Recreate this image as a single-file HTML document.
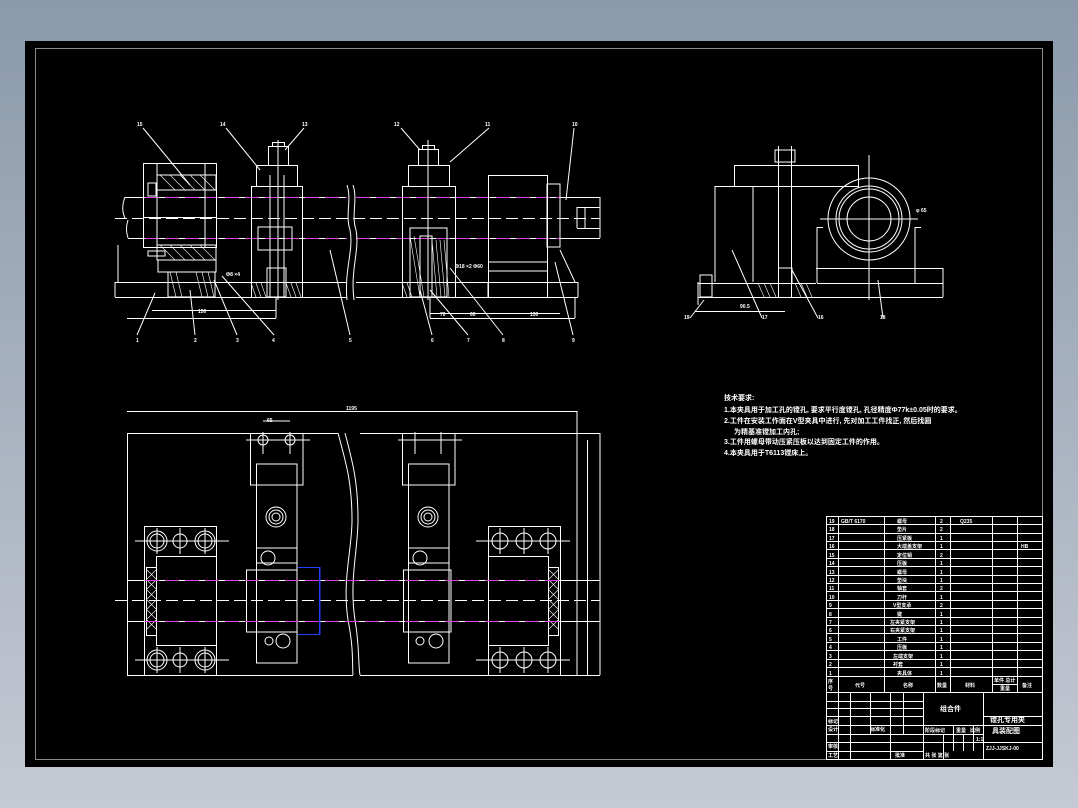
<!DOCTYPE html>
<html><head><meta charset="utf-8"><style>
html,body{margin:0;padding:0}
body{width:1078px;height:808px;overflow:hidden;background:linear-gradient(#8a9aab,#c5c9d3);}
svg{position:absolute;left:0;top:0}
text{font-family:"Liberation Sans","Noto Sans CJK SC",sans-serif;fill:#fff;font-weight:bold}
</style></head><body>
<svg width="1078" height="808" viewBox="0 0 1078 808" xmlns="http://www.w3.org/2000/svg">
<rect x="25" y="41" width="1028" height="726" fill="#000"/>
<rect x="35.5" y="48.5" width="1007" height="711" fill="none" stroke="#8a8a8a" stroke-width="1"/>
<g fill="none" stroke="#fff" stroke-width="1">
<!-- ===== Front view ===== -->
<!-- base -->
<path d="M115 282.5H347M356 282.5H578M115 297.5H347M356 297.5H578M115 282V297M578 282V297"/>
<path d="M127 318.5H276M430 318.5H575M276 297V318M430 297V318M575 297V318"/>
<!-- shaft -->
<path d="M125 197.5H347M356 197.5H600M128 238.5H347M356 238.5H600M600 197V238"/>
<path d="M125 197C122 205 122 212 125 218M128 238C126 232 126 226 128 220"/>
<path d="M577 207.5H600M577 228.5H600M577 207V228M585 207V228" />
<path d="M115 218.5H600" stroke-dasharray="12 5"/>
<path d="M145 197.5H347M356 197.5H560" stroke="#e040e0" stroke-dasharray="14 6"/>
<path d="M145 238.5H347M356 238.5H560" stroke="#e040e0" stroke-dasharray="14 6"/>
<!-- break lines -->
<path d="M347 185C352 200 345 215 350 230C354 250 344 270 347 300M353 185C358 200 351 215 356 230C360 250 350 270 354 300"/>
<!-- left housing -->
<rect x="143.5" y="163.5" width="73" height="84"/>
<path d="M157 163V247M205 163V247M143 217.5H216"/>
<path d="M157 175H216V190H157Z M157 245H216V260H157Z"/>
<g stroke-width="0.6"><path d="M160 175l15 15M170 175l15 15M180 175l15 15M190 175l15 15M200 175l15 15M160 245l15 15M170 245l15 15M180 245l15 15M190 245l15 15M200 245l15 15"/></g>
<path d="M148 183H156V196H148Z M148 251H165V256H148Z"/>
<path d="M158 260H216V272H158ZM168 272H215V297H168Z"/>
<g stroke-width="0.6"><path d="M170 272l6 25M176 272l6 25M196 272l6 25M202 272l6 25M208 272l6 25"/></g>
<!-- clamp 1 -->
<rect x="251.5" y="186.5" width="51" height="111"/>
<rect x="256.5" y="165.5" width="41" height="21"/>
<rect x="268.5" y="146.5" width="20" height="19"/>
<rect x="272.5" y="142.5" width="12" height="4"/>
<path d="M270 175V297M284 175V297M278 140V300"/>
<path d="M258 227H292V250H258Z M267 268H286V297H267Z"/>
<g stroke-width="0.6"><path d="M251 283l5 14M256 283l5 14M261 283l5 14M286 283l5 14M291 283l5 14M296 283l5 14"/></g>
<!-- clamp 2 -->
<rect x="402.5" y="186.5" width="53" height="111"/>
<rect x="408.5" y="165.5" width="41" height="21"/>
<rect x="418.5" y="149.5" width="20" height="16"/>
<rect x="422.5" y="145.5" width="12" height="4"/>
<path d="M428 140V300"/>
<path d="M410 228H447V297H410Z M420 236H432V297H420Z"/>
<g stroke-width="0.6"><path d="M410 236l10 61M414 236l10 61M432 240l5 57M436 240l5 57M440 240l5 57M444 240l5 57M402 283l5 14M407 283l5 14"/></g>
<!-- right block -->
<rect x="488.5" y="175.5" width="59" height="122"/>
<path d="M547 184H560V247H547Z M488 262H547M488 271H547 M488 282V297M560 250L575 282"/>
<!-- dims -->
<path d="M152 310.5H276M430 313.5H560M118 245V282"/>
<!-- leader lines -->
<path d="M143 128L190 185M226 128L260 170M304 128L285 150M401 128L420 150M489 128L450 162M574 128L566 200"/>
<path d="M137 335L155 293M195 335L190 290M237 335L214 280M274 335L222 276M350 335L330 250M432 335L420 290M468 335L430 290M503 335L450 268M573 335L555 262"/>
<!-- ===== Side view ===== -->
<rect x="734.5" y="165.5" width="124" height="21"/>
<path d="M715 186.5H858M715 186V282M753 186V282"/>
<circle cx="869" cy="219" r="41"/>
<circle cx="869" cy="219" r="33"/>
<circle cx="869" cy="219" r="30"/>
<circle cx="869" cy="219" r="22"/>
<path d="M823 227.5H817V283M921 227.5H915V283M817 283.5H943M816 268.5H943M943 268V297M698 283.5H816M698 297.5H943M698 282V305M869 155V300M820 219H918"/>
<path d="M778.5 146V297M791.5 146V297M775 162H795V150H775ZM778 268H792V283"/>
<g stroke-width="0.6"><path d="M758 283l6 14M764 283l6 14M770 283l6 14M795 283l6 14M801 283l6 14M806 283l6 14"/></g>
<path d="M700 275H712V297H700Z"/>
<path d="M695 311.5H785M732 250L762 318M792 270L818 318M878 280L883 318M690 318L704 300"/>
<!-- ===== Bottom view ===== -->
<path d="M127.5 433V675M127 433.5H338M360 433.5H600M127 675.5H353M360 675.5H600M600 433V675"/>
<path d="M338 433C345 460 352 480 352 520C352 550 342 580 348 620C354 650 352 665 353 675"/>
<path d="M345 433C352 460 358 480 358 520C358 550 349 580 355 620C360 650 358 665 360 675"/>
<path d="M127 411.5H577M577 411V675M587.5 440V675"/>
<rect x="144.5" y="526.5" width="72" height="149"/>
<rect x="156.5" y="556.5" width="60" height="89"/>
<rect x="146.5" y="567.5" width="10" height="68"/>
<rect x="488.5" y="526.5" width="72" height="149"/>
<rect x="488.5" y="556.5" width="60" height="89"/>
<rect x="548.5" y="567.5" width="10" height="68"/>
<g stroke-width="0.6"><path d="M147 570l9 9M147 580l9 9M147 590l9 9M147 600l9 9M147 610l9 9M147 620l9 9M156 570l-9 9M156 580l-9 9M156 590l-9 9M156 600l-9 9M156 610l-9 9M156 620l-9 9M549 570l9 9M549 580l9 9M549 590l9 9M549 600l9 9M549 610l9 9M549 620l9 9M558 570l-9 9M558 580l-9 9M558 590l-9 9M558 600l-9 9M558 610l-9 9M558 620l-9 9"/></g>
<g>
<circle cx="157" cy="541" r="10"/><circle cx="157" cy="541" r="7"/><circle cx="205" cy="541" r="10"/><circle cx="205" cy="541" r="7"/><circle cx="180" cy="541" r="7"/>
<circle cx="157" cy="660" r="10"/><circle cx="157" cy="660" r="7"/><circle cx="205" cy="660" r="10"/><circle cx="205" cy="660" r="7"/><circle cx="180" cy="660" r="7"/>
<circle cx="500" cy="541" r="8"/><circle cx="524" cy="541" r="8"/><circle cx="548" cy="541" r="8"/>
<circle cx="500" cy="660" r="8"/><circle cx="524" cy="660" r="8"/><circle cx="548" cy="660" r="8"/>
<path d="M135 541H229M135 660H229M476 541H570M476 660H570M157 528V554M205 528V554M180 528V554M157 647V673M205 647V673M180 647V673M500 528V554M524 528V554M548 528V554M500 647V673M524 647V673M548 647V673"/>
</g>
<!-- clamps bottom view -->
<path d="M250.5 433V485H303V433M256.5 464H297V663H256.5ZM246.5 570H297V632H246.5Z M256 548H297M256 563H297"/>
<circle cx="263" cy="440" r="5"/><circle cx="290" cy="440" r="5"/><path d="M246 440H310M263 432V454M290 432V454M263 421H290"/>
<circle cx="276" cy="517" r="10"/><circle cx="276" cy="517" r="7"/><circle cx="276" cy="517" r="4"/>
<circle cx="268" cy="558" r="7"/><circle cx="283" cy="641" r="7"/><circle cx="269" cy="641" r="4"/>
<path d="M402.5 433V485H455V433M408.5 464H449V663H408.5ZM403.5 570H451V632H403.5Z M408 548H449M408 563H449"/>
<path d="M398 440H462M415 432V454M441 432V454"/>
<circle cx="428" cy="517" r="10"/><circle cx="428" cy="517" r="7"/><circle cx="428" cy="517" r="4"/>
<circle cx="420" cy="558" r="7"/><circle cx="436" cy="641" r="7"/><circle cx="420" cy="641" r="4"/>
<path d="M127 580.5H600M127 621.5H600"/>
<path d="M145 580.5H560" stroke="#e040e0" stroke-dasharray="14 6"/>
<path d="M145 621.5H560" stroke="#e040e0" stroke-dasharray="14 6"/>
<path d="M115 600.5H600" stroke-dasharray="12 5"/>
<path d="M298 567.5H320V634.5H298M319.5 568V634" stroke="#2040ff"/>
<!-- ===== Table ===== -->
<rect x="826.5" y="516.5" width="216" height="243"/>
<path d="M838.5 516V692M884.5 516V692M935.5 516V692M950.5 516V692M992.5 516V692M1017.5 516V692"/>
<path d="M826 524.5H1042M826 533.5H1042M826 541.5H1042M826 549.5H1042M826 558.5H1042M826 566.5H1042M826 575.5H1042M826 583.5H1042M826 591.5H1042M826 600.5H1042M826 608.5H1042M826 617.5H1042M826 625.5H1042M826 633.5H1042M826 642.5H1042M826 650.5H1042M826 659.5H1042M826 667.5H1042M826 676.5H1042M992 684.5H1017M826 692.5H1042"/>
<path d="M826 701.5H923M826 708.5H923M826 716.5H923M826 725.5H1042M826 734.5H923M826 742.5H1042M826 751.5H923M923.5 692V759M983.5 692V759M983 716.5H1042M923 734.5H983M838.5 692V759M850.5 692V759M870.5 692V734M890.5 692V759M903.5 692V734M943.5 734V759M953.5 725V751M963.5 734V751M973.5 725V751"/>
</g>
<g font-size="5">
<text x="137" y="126">15</text><text x="220" y="126">14</text><text x="302" y="126">13</text><text x="394" y="126">12</text><text x="485" y="126">11</text><text x="572" y="126">10</text>
<text x="136" y="342">1</text><text x="194" y="342">2</text><text x="236" y="342">3</text><text x="272" y="342">4</text><text x="349" y="342">5</text><text x="431" y="342">6</text><text x="467" y="342">7</text><text x="502" y="342">8</text><text x="572" y="342">9</text>
<text x="684" y="319">19</text><text x="762" y="319">17</text><text x="818" y="319">16</text><text x="880" y="319">18</text>
<text x="198" y="313">150</text><text x="440" y="316">70</text><text x="470" y="316">60</text><text x="530" y="316">130</text><text x="740" y="308">90.5</text>
<text x="346" y="410">1195</text><text x="267" y="422">65</text>
<text x="226" y="276">Φ8 ×4</text><text x="455" y="268">Φ18 ×2 Φ60</text><text x="916" y="212">φ 65</text>
</g>
<g font-size="7">
<text x="724" y="400">技术要求:</text>
<text x="724" y="412">1.本夹具用于加工孔的镗孔, 要求平行度镗孔, 孔径精度Ф77k±0.05时的要求。</text>
<text x="724" y="423">2.工件在安装工作面在V型夹具中进行, 先对加工工件找正, 然后找圆</text>
<text x="734" y="434">为精基准镗加工内孔;</text>
<text x="724" y="444">3.工件用螺母带动压紧压板以达到固定工件的作用。</text>
<text x="724" y="455">4.本夹具用于T6113镗床上。</text>
</g>
<g font-size="5">
<text x="829" y="523">19</text><text x="841" y="523">GB/T 6170</text><text x="897" y="523">螺母</text><text x="940" y="523">2</text><text x="960" y="523">Q235</text>
<text x="829" y="531">18</text><text x="897" y="531">垫片</text><text x="940" y="531">2</text>
<text x="829" y="540">17</text><text x="897" y="540">压紧板</text><text x="940" y="540">1</text>
<text x="829" y="548">16</text><text x="897" y="548">大端盖支架</text><text x="940" y="548">1</text><text x="1021" y="548">HB</text>
<text x="829" y="557">15</text><text x="897" y="557">定位销</text><text x="940" y="557">2</text>
<text x="829" y="565">14</text><text x="897" y="565">压板</text><text x="940" y="565">1</text>
<text x="829" y="574">13</text><text x="897" y="574">螺母</text><text x="940" y="574">1</text>
<text x="829" y="582">12</text><text x="897" y="582">垫块</text><text x="940" y="582">1</text>
<text x="829" y="590">11</text><text x="897" y="590">轴套</text><text x="940" y="590">2</text>
<text x="829" y="599">10</text><text x="897" y="599">刀杆</text><text x="940" y="599">1</text>
<text x="829" y="607">9</text><text x="893" y="607">V型支承</text><text x="940" y="607">2</text>
<text x="829" y="616">8</text><text x="897" y="616">键</text><text x="940" y="616">1</text>
<text x="829" y="624">7</text><text x="890" y="624">左夹紧支架</text><text x="940" y="624">1</text>
<text x="829" y="632">6</text><text x="890" y="632">右夹紧支架</text><text x="940" y="632">1</text>
<text x="829" y="641">5</text><text x="897" y="641">工件</text><text x="940" y="641">1</text>
<text x="829" y="649">4</text><text x="897" y="649">压板</text><text x="940" y="649">1</text>
<text x="829" y="658">3</text><text x="893" y="658">左端支架</text><text x="940" y="658">1</text>
<text x="829" y="666">2</text><text x="893" y="666">衬套</text><text x="940" y="666">1</text>
<text x="829" y="675">1</text><text x="897" y="675">夹具体</text><text x="940" y="675">1</text>
<text x="828" y="683">序</text><text x="828" y="690">号</text><text x="855" y="687">代号</text><text x="903" y="687">名称</text><text x="937" y="687">数量</text><text x="965" y="687">材料</text><text x="994" y="682">单件 总计</text><text x="1000" y="690">重量</text><text x="1022" y="687">备注</text>
<text x="828" y="723">标记</text><text x="828" y="731">设计</text><text x="828" y="748">审核</text><text x="828" y="757">工艺</text><text x="870" y="731">标准化</text><text x="895" y="757">批准</text>
<text x="940" y="711" font-size="7">组合件</text>
<text x="990" y="722" font-size="7">镗孔专用夹</text><text x="992" y="733" font-size="7">具装配图</text>
<text x="925" y="732">阶段标记</text><text x="956" y="732">重量</text><text x="970" y="732">比例</text><text x="976" y="741">1:1</text>
<text x="925" y="757">共 张 第 张</text><text x="986" y="750">ZJJ-JJSKJ-00</text>
</g>
</svg>
</body></html>
